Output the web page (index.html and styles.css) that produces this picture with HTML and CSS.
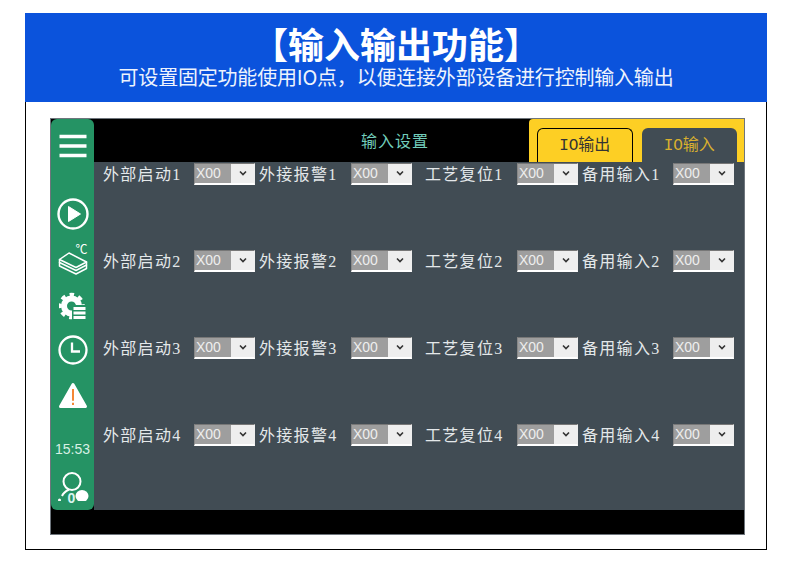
FILE: index.html
```html
<!DOCTYPE html>
<html lang="zh">
<head>
<meta charset="utf-8">
<title>输入输出功能</title>
<link rel="stylesheet" href="styles.css">
</head>
<body>
<main class="card">
  <header class="banner">
    <h1>【输入输出功能】</h1>
    <p>可设置固定功能使用IO点，以便连接外部设备进行控制输入输出</p>
  </header>
  <section class="screen">
    <div class="main-row">
      <nav class="sidebar">
        <svg class="i-menu" viewBox="0 0 28 24"><path d="M0.5 2.5H27.5M0.5 12H27.5M0.5 21.5H27.5" stroke="#fff" stroke-width="3.4" fill="none"/></svg>
        <svg class="i-play" viewBox="0 0 32 32"><circle cx="16" cy="16" r="14.5" stroke="#fff" stroke-width="2.4" fill="none"/><path d="M11.5 8.5 L23.5 16 L11.5 23.5Z" fill="#fff" stroke="#fff" stroke-linejoin="round"/></svg>
        <svg class="i-layers" viewBox="0 -4 30 34"><g fill="none" stroke="#fff" stroke-width="1.5" stroke-linejoin="round" stroke-linecap="round"><path d="M1.5 14.5 L11 8 L28.5 17 L18 22.5Z"/><path d="M1.5 14.5 V17.5 L18 25.5 L28.5 20"/><path d="M1.5 17.5 V21 L18 29 L28.5 23.5 V17"/></g><text x="17.5" y="9" class="deg">℃</text></svg>
        <svg class="i-gear" viewBox="0 0 28 30"><circle cx="12.5" cy="15" r="7.5" stroke="#fff" stroke-width="6" fill="none"/><circle cx="12.5" cy="15" r="11.5" stroke="#fff" stroke-width="3.5" fill="none" stroke-dasharray="4.5 4.53" stroke-dashoffset="2.25"/><rect x="13" y="14" width="15" height="16" fill="#259364"/><rect x="14.5" y="16" width="12" height="3" fill="#fff"/><rect x="14.5" y="20.5" width="12" height="3" fill="#fff"/><rect x="14.5" y="25" width="12" height="3" fill="#fff"/></svg>
        <svg class="i-clock" viewBox="0 0 30 30"><circle cx="15" cy="15" r="13.5" stroke="#fff" stroke-width="2.3" fill="none"/><path d="M14 7.5 V16.5 H22" stroke="#fff" stroke-width="2.3" fill="none"/></svg>
        <svg class="i-warn" viewBox="0 0 30 27"><path d="M15 2.5 L27.5 24.5 H2.5Z" fill="#fff" stroke="#fff" stroke-width="3" stroke-linejoin="round"/><path d="M15 7 V18.7 M15 20.7 V23" stroke="#f47a20" stroke-width="1.8"/></svg>
        <span class="clock-text">15:53</span>
        <div class="user">
          <svg class="i-user" viewBox="0 0 32 30"><circle cx="15" cy="10.5" r="8.5" stroke="#fff" stroke-width="2" fill="none"/><path d="M5 25 C6.5 21.5 9 20 12 18.5" stroke="#fff" stroke-width="2" fill="none"/><circle cx="2.5" cy="29" r="1.5" fill="#fff"/><ellipse cx="25" cy="25" rx="6.5" ry="6" fill="#fff"/></svg>
          <span class="user-count">0</span>
        </div>
      </nav>
      <div class="content">
        <div class="topbar">
          <span class="screen-title">输入设置</span>
          <div class="tabs">
            <span class="tab tab-on">IO输出</span>
            <span class="tab tab-off">IO输入</span>
          </div>
        </div>
        <div class="fields">
          <label>外部启动1</label><span class="sel"><span class="val">X00</span><span class="arrow"><svg viewBox="0 0 8 6"><path d="M1 1.5 L4 4.5 L7 1.5" stroke="#333" stroke-width="1.6" fill="none"/></svg></span></span>
          <label>外接报警1</label><span class="sel"><span class="val">X00</span><span class="arrow"><svg viewBox="0 0 8 6"><path d="M1 1.5 L4 4.5 L7 1.5" stroke="#333" stroke-width="1.6" fill="none"/></svg></span></span>
          <label>工艺复位1</label><span class="sel"><span class="val">X00</span><span class="arrow"><svg viewBox="0 0 8 6"><path d="M1 1.5 L4 4.5 L7 1.5" stroke="#333" stroke-width="1.6" fill="none"/></svg></span></span>
          <label>备用输入1</label><span class="sel"><span class="val">X00</span><span class="arrow"><svg viewBox="0 0 8 6"><path d="M1 1.5 L4 4.5 L7 1.5" stroke="#333" stroke-width="1.6" fill="none"/></svg></span></span>

          <label>外部启动2</label><span class="sel"><span class="val">X00</span><span class="arrow"><svg viewBox="0 0 8 6"><path d="M1 1.5 L4 4.5 L7 1.5" stroke="#333" stroke-width="1.6" fill="none"/></svg></span></span>
          <label>外接报警2</label><span class="sel"><span class="val">X00</span><span class="arrow"><svg viewBox="0 0 8 6"><path d="M1 1.5 L4 4.5 L7 1.5" stroke="#333" stroke-width="1.6" fill="none"/></svg></span></span>
          <label>工艺复位2</label><span class="sel"><span class="val">X00</span><span class="arrow"><svg viewBox="0 0 8 6"><path d="M1 1.5 L4 4.5 L7 1.5" stroke="#333" stroke-width="1.6" fill="none"/></svg></span></span>
          <label>备用输入2</label><span class="sel"><span class="val">X00</span><span class="arrow"><svg viewBox="0 0 8 6"><path d="M1 1.5 L4 4.5 L7 1.5" stroke="#333" stroke-width="1.6" fill="none"/></svg></span></span>

          <label>外部启动3</label><span class="sel"><span class="val">X00</span><span class="arrow"><svg viewBox="0 0 8 6"><path d="M1 1.5 L4 4.5 L7 1.5" stroke="#333" stroke-width="1.6" fill="none"/></svg></span></span>
          <label>外接报警3</label><span class="sel"><span class="val">X00</span><span class="arrow"><svg viewBox="0 0 8 6"><path d="M1 1.5 L4 4.5 L7 1.5" stroke="#333" stroke-width="1.6" fill="none"/></svg></span></span>
          <label>工艺复位3</label><span class="sel"><span class="val">X00</span><span class="arrow"><svg viewBox="0 0 8 6"><path d="M1 1.5 L4 4.5 L7 1.5" stroke="#333" stroke-width="1.6" fill="none"/></svg></span></span>
          <label>备用输入3</label><span class="sel"><span class="val">X00</span><span class="arrow"><svg viewBox="0 0 8 6"><path d="M1 1.5 L4 4.5 L7 1.5" stroke="#333" stroke-width="1.6" fill="none"/></svg></span></span>

          <label>外部启动4</label><span class="sel"><span class="val">X00</span><span class="arrow"><svg viewBox="0 0 8 6"><path d="M1 1.5 L4 4.5 L7 1.5" stroke="#333" stroke-width="1.6" fill="none"/></svg></span></span>
          <label>外接报警4</label><span class="sel"><span class="val">X00</span><span class="arrow"><svg viewBox="0 0 8 6"><path d="M1 1.5 L4 4.5 L7 1.5" stroke="#333" stroke-width="1.6" fill="none"/></svg></span></span>
          <label>工艺复位4</label><span class="sel"><span class="val">X00</span><span class="arrow"><svg viewBox="0 0 8 6"><path d="M1 1.5 L4 4.5 L7 1.5" stroke="#333" stroke-width="1.6" fill="none"/></svg></span></span>
          <label>备用输入4</label><span class="sel"><span class="val">X00</span><span class="arrow"><svg viewBox="0 0 8 6"><path d="M1 1.5 L4 4.5 L7 1.5" stroke="#333" stroke-width="1.6" fill="none"/></svg></span></span>
        </div>
      </div>
    </div>
    <div class="footer-bar"></div>
  </section>
</main>
</body>
</html>
```
FILE: styles.css
```css
* { box-sizing: border-box; }
html, body { margin: 0; padding: 0; background: #fff; }
body {
  width: 790px;
  height: 567px;
  overflow: hidden;
  padding: 13px 23px 0 25px;
  font-family: "Noto Sans CJK SC", "Noto Sans", sans-serif;
}
.card {
  width: 742px;
  height: 537px;
  border: 1px solid #000;
  border-top: 0;
  display: flex;
  flex-direction: column;
}
.banner {
  height: 89px;
  margin: 0 -1px;
  background: #0b53dc;
  color: #fff;
  text-align: center;
  display: flex;
  flex-direction: column;
  align-items: center;
}
.banner h1 {
  margin: 10px 0 0;
  height: 40px;
  font-size: 36px;
  line-height: 40px;
  font-weight: 700;
}
.banner p {
  margin: 0;
  font-size: 20px;
  line-height: 28px;
  letter-spacing: -0.2px;
  color: #eef3fd;
}
.screen {
  width: 695px;
  height: 417px;
  margin: 16px 0 0 24px;
  border: 1px solid #6e757c;
  background: #000;
  display: flex;
  flex-direction: column;
}
.main-row { display: flex; height: 391px; }
.sidebar {
  width: 43px;
  height: 391px;
  background: #259364;
  border-radius: 6px;
  display: flex;
  flex-direction: column;
  align-items: center;
  color: #fff;
}
.sidebar svg { display: block; flex: none; }
.i-menu { width: 28px; height: 24px; margin-top: 15px; }
.i-play { width: 32px; height: 32px; margin-top: 40px; }
.i-layers { width: 30px; height: 34px; margin-top: 11px; }
.deg { font-size: 12px; fill: #fff; font-family: "Noto Sans CJK SC", sans-serif; }
.i-gear { width: 28px; height: 30px; margin-top: 16px; }
.i-clock { width: 30px; height: 30px; margin-top: 14px; }
.i-warn { width: 30px; height: 27px; margin-top: 17px; }
.clock-text {
  margin-top: 32px;
  height: 16px;
  font-family: "Liberation Sans", sans-serif;
  font-size: 14px;
  line-height: 16px;
  color: #d8f0e4;
}
.user { position: relative; width: 32px; height: 30px; margin-top: 14px; }
.i-user { width: 32px; height: 30px; }
.user-count {
  position: absolute;
  left: 11px;
  top: 20px;
  font-family: "Liberation Sans", sans-serif;
  font-size: 14px;
  font-weight: 700;
  line-height: 14px;
  color: #d8f4f0;
}
.content { width: 650px; display: flex; flex-direction: column; }
.topbar { height: 43px; display: flex; background: #000; }
.screen-title {
  margin: 10px 0 0 267px;
  width: 168px;
  height: 22px;
  font-size: 16px;
  line-height: 22px;
  letter-spacing: 1px;
  color: #72cdbb;
}
.tabs {
  width: 215px;
  height: 43px;
  padding: 9px 7px 0 8px;
  background: #fdcf24;
  border-radius: 4px 0 0 0;
  display: flex;
  gap: 9px;
}
.tab {
  width: 96px;
  height: 34px;
  border-radius: 6px 6px 0 0;
  text-align: center;
  font-family: "Liberation Mono", "Noto Sans CJK SC", monospace;
  font-size: 16px;
  line-height: 36px;
}
.tab-on { background: #fdcf24; color: #333; border: 1px solid #000; border-bottom: 0; line-height: 34px; }
.tab-off { background: #414c54; color: #d9b02e; }
.fields {
  height: 348px;
  padding: 1px 0 0 9px;
  background: #414c54;
  display: grid;
  grid-template-columns: 91px 65px 92px 74px 92px 65px 91px 61px;
  grid-auto-rows: 87px;
  color: #e4e8ea;
}
.fields label {
  height: 21px;
  font-family: "Liberation Serif", "Noto Sans CJK SC", serif;
  font-size: 16px;
  line-height: 23px;
  letter-spacing: 1.3px;
  white-space: nowrap;
}
.sel {
  width: 61px;
  height: 22px;
  display: flex;
  border-style: solid;
  border-width: 1px 1px 2px 1px;
  border-color: #777 #eee #fff #888;
  background: #eee;
}
.val {
  width: 36px;
  padding-left: 1px;
  background: #9e9e9e;
  color: #eee;
  font-family: "Liberation Sans", sans-serif;
  font-size: 14px;
  line-height: 18px;
}
.arrow { flex: 1; display: flex; align-items: center; justify-content: center; padding-bottom: 2px; }
.arrow svg { width: 8px; height: 6px; display: block; }
.footer-bar { flex: 1; background: #000; }
```
